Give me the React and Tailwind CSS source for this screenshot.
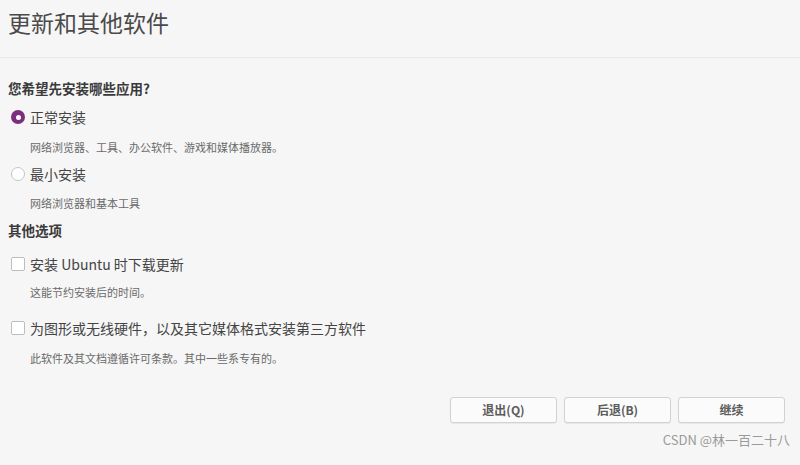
const font = { fontFamily: '"Noto Sans CJK SC", "Noto Sans", sans-serif' };

function Radio({ checked }) {
    return checked ? (
        <span className="w-[14px] h-[14px] rounded-full bg-[#7c2f7e] flex items-center justify-center flex-shrink-0">
            <span className="w-[5px] h-[5px] rounded-full bg-white" />
        </span>
    ) : (
        <span className="w-[14px] h-[14px] rounded-full border border-[#c4c4c4] bg-white flex-shrink-0" />
    );
}

function Checkbox() {
    return <span className="w-[14px] h-[14px] rounded-[2px] border border-[#bdbdbd] bg-white flex-shrink-0" />;
}

function Option({ control, label, desc, descGap }) {
    return (
        <div>
            <div className="flex items-center gap-[5px] pl-[3px] h-5">
                {control}
                <span className="text-[14px] text-[#444] leading-5">{label}</span>
            </div>
            <div className={`pl-[22px] text-[11px] text-[#6a6a6a] leading-4 ${descGap}`}>{desc}</div>
        </div>
    );
}

export default function App() {
    return (
        <div className="w-[800px] h-[465px] bg-[#f6f6f6] overflow-hidden" style={font}>
            <div className="h-[58px] flex items-center pl-2 border-b border-[#e8e8e8]">
                <h1 className="text-[23px] text-[#4a4a4a] -mt-[12px]">更新和其他软件</h1>
            </div>

            <div className="pl-2 pr-[15px]">
                <div className="mt-[21px] text-[13.5px] font-bold text-[#3a3a3a] leading-[18px]">您希望先安装哪些应用?</div>

                <div className="mt-[10px]">
                    <Option control={<Radio checked />} label="正常安装" desc="网络浏览器、工具、办公软件、游戏和媒体播放器。" descGap="mt-[12px]" />
                </div>
                <div className="mt-[9px]">
                    <Option control={<Radio />} label="最小安装" desc="网络浏览器和基本工具" descGap="mt-[11px]" />
                </div>

                <div className="mt-[10px] text-[13.5px] font-bold text-[#3a3a3a] leading-[18px]">其他选项</div>

                <div className="mt-[15px]">
                    <Option control={<Checkbox />} label="安装 Ubuntu 时下载更新" desc="这能节约安装后的时间。" descGap="mt-[10px]" />
                </div>
                <div className="mt-[18px]">
                    <Option control={<Checkbox />} label="为图形或无线硬件，以及其它媒体格式安装第三方软件" desc="此软件及其文档遵循许可条款。其中一些系专有的。" descGap="mt-[12px]" />
                </div>

                <div className="mt-[31px] flex justify-end gap-[7px]">
                    {['退出(Q)', '后退(B)', '继续'].map(t => (
                        <button
                            key={t}
                            className="w-[107px] h-[26px] rounded-[3px] border border-[#d2d2d2] bg-[#fbfbfb] shadow-[0_1px_1px_rgba(0,0,0,0.06)] text-[12px] font-bold text-[#5c5c5c]"
                        >
                            {t}
                        </button>
                    ))}
                </div>

                <div className="mt-[9px] flex justify-end">
                    <span className="text-[13px] text-[#9a9a9a] leading-4 mr-[-5px]">CSDN @林一百二十八</span>
                </div>
            </div>
        </div>
    );
}
